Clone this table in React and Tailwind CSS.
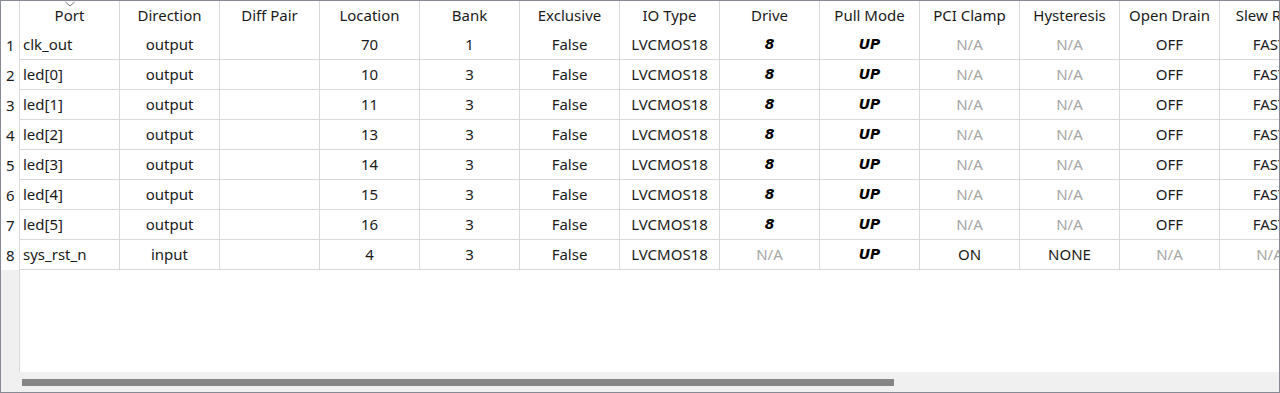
import React from "react";

const columns = [
  "Port", "Direction", "Diff Pair", "Location", "Bank", "Exclusive", "IO Type",
  "Drive", "Pull Mode", "PCI Clamp", "Hysteresis", "Open Drain", "Slew Rate",
];

const ports = [
  ["clk_out", "output", "", "70", "1", "False", "LVCMOS18", "8", "UP", "N/A", "N/A", "OFF", "FAST"],
  ["led[0]", "output", "", "10", "3", "False", "LVCMOS18", "8", "UP", "N/A", "N/A", "OFF", "FAST"],
  ["led[1]", "output", "", "11", "3", "False", "LVCMOS18", "8", "UP", "N/A", "N/A", "OFF", "FAST"],
  ["led[2]", "output", "", "13", "3", "False", "LVCMOS18", "8", "UP", "N/A", "N/A", "OFF", "FAST"],
  ["led[3]", "output", "", "14", "3", "False", "LVCMOS18", "8", "UP", "N/A", "N/A", "OFF", "FAST"],
  ["led[4]", "output", "", "15", "3", "False", "LVCMOS18", "8", "UP", "N/A", "N/A", "OFF", "FAST"],
  ["led[5]", "output", "", "16", "3", "False", "LVCMOS18", "8", "UP", "N/A", "N/A", "OFF", "FAST"],
  ["sys_rst_n", "input", "", "4", "3", "False", "LVCMOS18", "N/A", "UP", "ON", "NONE", "N/A", "N/A"],
];

function Cell({ value, col }) {
  const base = "w-[100px] shrink-0 h-[30px] border-r border-b border-[#d9d9d9] flex items-center whitespace-nowrap overflow-hidden";
  if (col === 0) {
    return <div className={`${base} pl-[3px] text-[#1a1a1a]`}>{value}</div>;
  }
  if (value === "N/A") {
    return <div className={`${base} justify-center text-[#a6a6a6]`}>{value}</div>;
  }
  if (col === 7 || col === 8) {
    // modified values show in bold italic
    return (
      <div className={`${base} justify-center text-black font-bold italic text-[14px] font-['DejaVu_Sans',sans-serif]`}>
        {value}
      </div>
    );
  }
  return <div className={`${base} justify-center text-[#1a1a1a]`}>{value}</div>;
}

export default function App() {
  return (
    <div className="w-[1280px] h-[393px] border border-[#868a93] bg-white flex flex-col overflow-hidden font-['Noto_Sans',sans-serif] text-[15px]">
      <div className="flex-1 flex overflow-hidden">
        {/* row numbers */}
        <div className="w-[19px] shrink-0 flex flex-col border-r border-[#d9d9d9]">
          <div className="h-[29px] bg-white" />
          {ports.map((_, i) => (
            <div key={i} className="h-[30px] bg-white flex items-center pl-[5px] text-[#1a1a1a]">
              {i + 1}
            </div>
          ))}
          <div className="flex-1 bg-[#f0f0f0]" />
        </div>

        <div className="flex-1 flex flex-col overflow-hidden">
          <div className="flex h-[29px] shrink-0">
            {columns.map((c, i) => (
              <div
                key={c}
                className="relative w-[100px] shrink-0 h-[29px] border-r border-[#d9d9d9] flex items-center justify-center whitespace-nowrap text-[#1a1a1a]"
              >
                {i === 0 && (
                  <svg className="absolute top-0 left-1/2 -translate-x-1/2" width="11" height="6" viewBox="0 0 11 6">
                    <polyline points="1,1 5.5,5 10,1" fill="none" stroke="#777" strokeWidth="1" />
                  </svg>
                )}
                {c}
              </div>
            ))}
          </div>
          {ports.map((row, r) => (
            <div key={r} className="flex shrink-0">
              {row.map((v, c) => (
                <Cell key={c} value={v} col={c} />
              ))}
            </div>
          ))}
          <div className="flex-1" />
        </div>
      </div>

      {/* horizontal scrollbar */}
      <div className="h-[20px] shrink-0 bg-[#f0f0f0] flex items-center pl-[21px]">
        <div className="w-[872px] h-[7px] bg-[#858585]" />
      </div>
    </div>
  );
}
